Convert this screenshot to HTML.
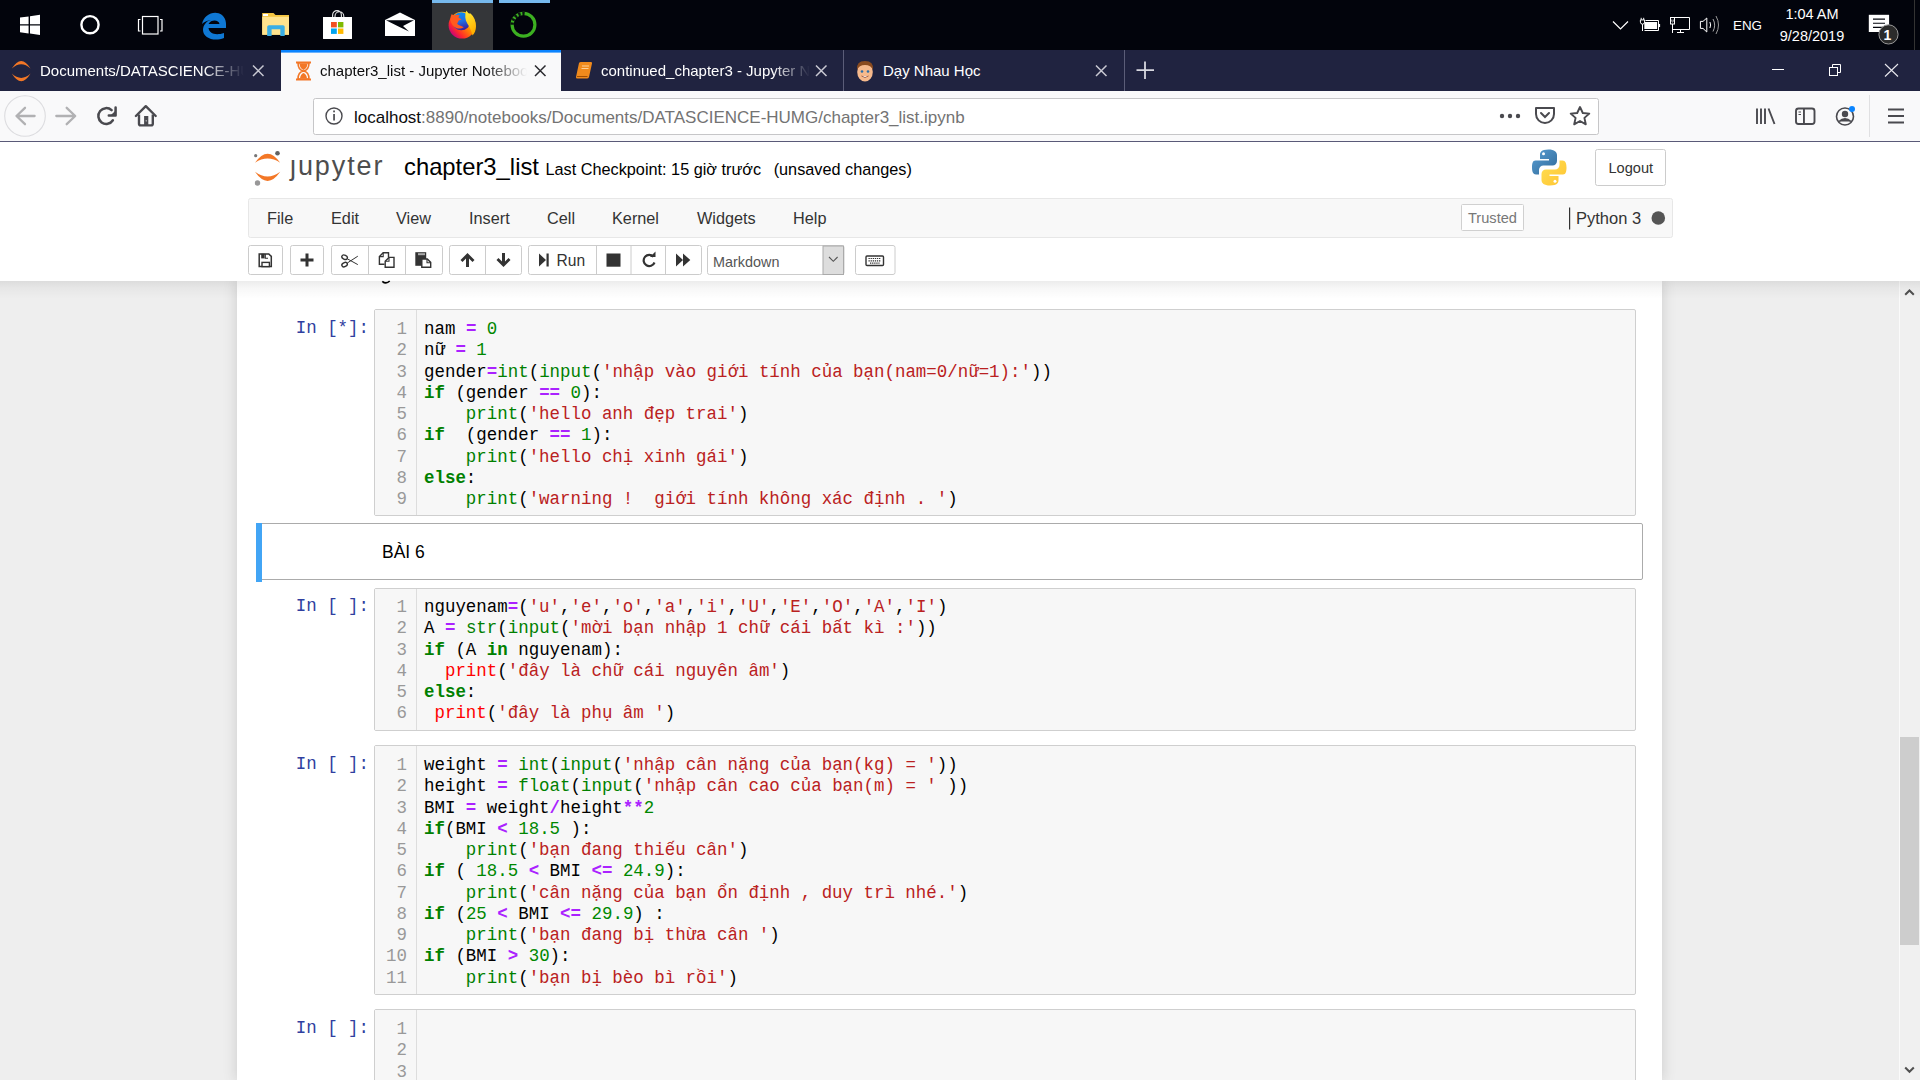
<!DOCTYPE html>
<html><head><meta charset="utf-8">
<style>
*{box-sizing:border-box;margin:0;padding:0}
html,body{width:1920px;height:1080px;overflow:hidden;background:#eee;font-family:"Liberation Sans",sans-serif}
.abs{position:absolute}
#taskbar{position:absolute;left:0;top:0;width:1920px;height:50px;background:#02040c}
#tabbar{position:absolute;left:0;top:50px;width:1920px;height:41px;background:#202340}
#navbar{position:absolute;left:0;top:91px;width:1920px;height:51px;background:#f9f9fa;border-bottom:1px solid #5a5a78}
#header{position:absolute;left:0;top:142px;width:1920px;height:139px;background:#fff;z-index:2;}
#nb{position:absolute;left:237px;top:281px;width:1425px;height:799px;background:#fff;box-shadow:0 0 12px 1px rgba(87,87,87,.2)}
.tab{position:absolute;top:0;height:41px;color:#fff;font-size:15px}
.tabtxt{position:absolute;top:12px;white-space:nowrap;overflow:hidden}
.mono{font-family:"Liberation Mono",monospace}
.prompt{position:absolute;font-family:"Liberation Mono",monospace;font-size:17.45px;color:#303f9f;text-align:right;width:132px;margin-top:1px}
.inarea{position:absolute;left:137px;width:1262px;background:#f7f7f7;border:1px solid #cfcfcf;border-radius:2px}
.gutter{position:absolute;left:0;top:0;bottom:0;width:42px;background:#f7f7f7;border-right:1px solid #ddd}
.code{position:absolute;left:49px;top:9px;font-family:"Liberation Mono",monospace;font-size:17.45px;line-height:21.25px;white-space:pre;color:#000}
.ln{position:absolute;left:0;top:9px;width:32px;text-align:right;font-family:"Liberation Mono",monospace;font-size:17.45px;line-height:21.25px;white-space:pre;color:#999}
.k{color:#008000;font-weight:bold;-webkit-text-stroke:0}
.o{color:#aa22ff;font-weight:bold;-webkit-text-stroke:0}
.b{color:#008000}
.s{color:#ba2121}
.n{color:#080}
.e{color:#f00}
</style></head><body>
<div id="taskbar">
<svg class="abs" style="left:0;top:0" width="1920" height="50">
 <!-- windows logo -->
 <path d="M20 17.6 L28.6 16.4 L28.6 24.2 L20 24.2Z M30 16.2 L40 14.8 L40 24.2 L30 24.2Z M20 25.6 L28.6 25.6 L28.6 33.4 L20 32.2Z M30 25.6 L40 25.6 L40 35 L30 33.6Z" fill="#fff"/>
 <!-- cortana -->
 <circle cx="90" cy="24.7" r="8.6" fill="none" stroke="#fff" stroke-width="2.4"/>
 <!-- task view -->
 <rect x="142.5" y="16.5" width="15.5" height="17.5" fill="none" stroke="#fff" stroke-width="1.2"/>
 <path d="M140.5 19.5 H138.5 V31 H140.5 M160 19.5 H162 V31 H160" fill="none" stroke="#fff" stroke-width="1.2"/>
 <!-- edge -->
 <path d="M202 24 C204 14 215 10 222 15 C227 19 226 26 226 28 L208.5 28 C209 33 215 36 224 33 L224 38 C214 42 203 38 203 30 C203 25 207 20 212 20 C208 20 204 22 202 24Z M208.5 24 L219.5 24 C219 19.5 211 19 208.5 24Z" fill="#0f78d4" fill-rule="evenodd"/>
 <!-- file explorer -->
 <path d="M262.2 13 L273.5 13 L275.5 15 L289 15 L289 34.8 L262.2 34.8Z" fill="#f4c542"/>
 <path d="M262.2 16.8 L289 16.8 L289 34.8 L262.2 34.8Z" fill="#ffe38e"/>
 <rect x="263" y="14" width="5" height="2" fill="#fff"/>
 <path d="M267.2 36 V26.8 Q267.2 25.2 269 25.2 H283 Q284.7 25.2 284.7 26.8 V36 H280.3 V29.2 H271.6 V36Z" fill="#3aaee5"/>
 <!-- store -->
 <path d="M332.6 17.5 V15 A4.4 4.4 0 0 1 341.4 15 V17.5 M335 17.5 V16.2 A4.4 4.4 0 0 1 343.8 16.2 V17.5" fill="none" stroke="#e6e6e6" stroke-width="1.1"/>
 <path d="M323 17 H352 V38.5 C352 39 351.5 39 351 39 H324 C323.5 39 323 39 323 38.5Z" fill="#fff"/>
 <rect x="331" y="22" width="5.8" height="5.4" fill="#f25022"/>
 <rect x="338" y="22" width="5.4" height="5.4" fill="#7fba00"/>
 <rect x="331" y="28.5" width="5.8" height="5.4" fill="#00a4ef"/>
 <rect x="338" y="28.5" width="5.4" height="5.4" fill="#ffb900"/>
 <!-- mail -->
 <path d="M385 20 L400 12.5 L415 20 V36 H385Z" fill="#fff"/>
 <path d="M386 20.3 L414 20.3 L403 26 L409 31.5 L399.5 27Z" fill="#02040c"/>
 <!-- firefox highlight -->
 <rect x="432" y="0" width="61" height="50" fill="#343639"/>
 <rect x="432" y="0" width="61" height="3" fill="#76b9ed"/>
 <rect x="499" y="0" width="51" height="3" fill="#76b9ed"/>
 <defs>
  <linearGradient id="ffg" x1="0.15" y1="0.9" x2="0.9" y2="0.2"><stop offset="0" stop-color="#c5007f"/><stop offset="0.25" stop-color="#ff2a2a"/><stop offset="0.6" stop-color="#ff8a00"/><stop offset="1" stop-color="#ffd51a"/></linearGradient>
  <linearGradient id="ffb" x1="0.3" y1="0" x2="0.6" y2="1"><stop offset="0" stop-color="#0a8ff0"/><stop offset="0.5" stop-color="#1f6fe6"/><stop offset="1" stop-color="#3a1a9a"/></linearGradient>
  <linearGradient id="fft" x1="0" y1="0" x2="0.4" y2="1"><stop offset="0" stop-color="#fff03a"/><stop offset="1" stop-color="#ffb000"/></linearGradient>
 </defs>
 <circle cx="462" cy="25.2" r="13.4" fill="url(#ffg)"/>
 <circle cx="461.3" cy="21.3" r="9" fill="url(#ffb)"/>
 <path d="M466.3 10.6 L468.6 13.6 L470.6 13.4 C474 16.5 476 21 476 26 C476 30.5 474.5 33.5 472.5 35.5 C471.5 30 469 26 467.3 23.5 C465 20 464.6 15 466.3 10.6Z" fill="url(#fft)"/>
 <path d="M451.8 13.9 L453.5 15.5 C455.5 14.8 457.5 14.8 459.6 15.3 L458.3 17.3 L461.6 19.6 L458.8 20.6 L457.1 23.8 C458.5 25.5 461 25.8 463.8 27.2 C462 28.5 459 28.8 456.8 28.2 C453.5 27 451.2 24 450.5 20.5 C450.2 18 450.7 15.8 451.8 13.9Z" fill="#ff5a1f"/>
 <!-- green ring -->
 <circle cx="523.5" cy="24.8" r="11.4" fill="none" stroke="#3cb021" stroke-width="3.2"/>
 <circle cx="523.5" cy="24.8" r="11.4" fill="none" stroke="#02040c" stroke-width="3.4" stroke-dasharray="1.6 1.6" stroke-dashoffset="0" pathLength="60" transform="rotate(180 523.5 24.8)" opacity="0.9" style="stroke-dasharray:2 1.5 2 1.5 2 1.5 2 1.5 2 100"/>
 <!-- tray -->
 <path d="M1613 21.5 L1620.5 29 L1628 21.5" fill="none" stroke="#fff" stroke-width="1.2"/>
 <path d="M1641.2 17.8 V19.8 M1643.7 17.8 V19.8" stroke="#fff" stroke-width="1"/>
 <path d="M1640.4 19.9 H1644.6 V22.2 Q1644.6 24 1642.5 24.2 Q1640.4 24 1640.4 22.2Z" fill="none" stroke="#fff" stroke-width="1"/>
 <path d="M1642.5 24.2 V31" stroke="#fff" stroke-width="1"/>
 <path d="M1645.5 20.5 H1658.5 V30.5 H1644.5" fill="none" stroke="#fff" stroke-width="1"/>
 <rect x="1644.3" y="22" width="12.8" height="7" fill="#fff"/>
 <rect x="1659" y="24" width="1.1" height="3" fill="#fff"/>
 <path d="M1670.5 17.5 H1689.5 V29.5 H1673 M1672.5 24 V33 M1677 32.5 H1684 M1680.5 29.5 V32.5" fill="none" stroke="#fff" stroke-width="1"/>
 <rect x="1670.5" y="17.5" width="4" height="6.5" fill="#02040c" stroke="#fff" stroke-width="1"/>
 <path d="M1671.8 19.5 V21.5 Q1672.5 22.5 1673.3 21.5 V19.5" fill="none" stroke="#fff" stroke-width="0.7"/>
 <path d="M1700.4 21.4 H1703 L1706.8 18 V32 L1703 28.4 H1700.4Z" fill="none" stroke="#fff" stroke-width="1"/>
 <path d="M1709.9 22 Q1711.4 25 1709.9 28" fill="none" stroke="#fff" stroke-width="1"/>
 <path d="M1713 19 Q1716.3 25 1713 31.5" fill="none" stroke="#aaa" stroke-width="1"/>
 <path d="M1716 16 Q1721 25 1716 34" fill="none" stroke="#999" stroke-width="1"/>
 <!-- notification -->
 <path d="M1868.8 14.8 H1889.1 V32 H1878.5 L1875 32 V32 H1868.8Z" fill="#fff"/>
 <path d="M1873 19.1 H1885 M1873 23.3 H1885 M1873 27.4 H1885" stroke="#02040c" stroke-width="1.1"/>
 <circle cx="1888.5" cy="34.4" r="9.6" fill="#2b2b2b" stroke="#999" stroke-width="1"/>
 <rect x="1914" y="0" width="1" height="50" fill="#333"/>
</svg>
<div class="abs" style="left:1733px;top:18px;font-size:13.4px;color:#fff;letter-spacing:0">ENG</div>
<div class="abs" style="left:1770px;top:5px;width:84px;text-align:center;font-size:14.5px;color:#fff;line-height:18px">1:04 AM<br><span style="position:relative;top:4px">9/28/2019</span></div>
<div class="abs" style="left:1883.5px;top:26.5px;font-size:14px;color:#fff;font-weight:bold">1</div>
</div>

<div id="tabbar">
<svg class="abs" style="left:0;top:0" width="1920" height="41">
 <!-- tab1 jupyter favicon -->
 <path d="M11.8 18.6 Q21.2 3.2 30.6 18.6 Q21.2 10 11.8 18.6Z" fill="#f37726"/>
 <path d="M11.8 23.6 Q21.2 39 30.6 23.6 Q21.2 32.2 11.8 23.6Z" fill="#f37726"/>
 <path d="M253 15.5 L263.5 26 M263.5 15.5 L253 26" stroke="#c8c9d2" stroke-width="1.5"/>
 <!-- active tab -->
 <rect x="281" y="0" width="280" height="41" fill="#f9f9fa"/>
 <rect x="281" y="0" width="280" height="2.6" fill="#0a84ff"/>
 <path d="M296 12.5 H311 M296 29.5 H311" stroke="#f37726" stroke-width="2.2"/>
 <path d="M298 13 Q298 20 303.5 21 Q309 20 309 13Z M298 29 Q298 22 303.5 21 Q309 22 309 29Z" fill="none" stroke="#f37726" stroke-width="1.6"/>
 <path d="M299.5 14 H307.5 Q307 18.5 303.5 20 Q300 18.5 299.5 14Z M300 28.5 Q300.5 24 303.5 23 Q306.5 24 307 28.5Z" fill="#f37726"/>
 <path d="M535 15.5 L545.5 26 M545.5 15.5 L535 26" stroke="#2a2a2e" stroke-width="1.5"/>
 <!-- tab3 book -->
 <path d="M576 27 L579 13 Q579.5 12 581 12 L591 12 Q592.5 12 592 13.5 L589 27 Q588.5 28.5 587 28.5 L577.5 28.5 Q575.5 28.5 576 27Z" fill="#f08a1c"/>
 <path d="M577 26.5 L587.5 26.5" stroke="#a24e00" stroke-width="1"/>
 <path d="M582 16 H589 M581.5 18.5 H588.5" stroke="#ffd9a8" stroke-width="0.9"/>
 <path d="M816 15.5 L826.5 26 M826.5 15.5 L816 26" stroke="#c8c9d2" stroke-width="1.5"/>
 <rect x="843" y="0" width="1" height="41" fill="#5b5d78"/>
 <!-- tab4 face -->
 <ellipse cx="865" cy="22" rx="7.8" ry="9.5" fill="#f6b98c"/>
 <path d="M857 20 Q856 11 865 11 Q874 11 873 20 Q871 15 865 15 Q859 15 857 20Z" fill="#8a4b1f"/>
 <circle cx="862" cy="21.5" r="1.3" fill="#2b6ea8"/><circle cx="868" cy="21.5" r="1.3" fill="#2b6ea8"/>
 <path d="M861.5 26 Q865 29 868.5 26" fill="#fff" stroke="#8a3b1f" stroke-width="0.8"/>
 <path d="M1096 15.5 L1106.5 26 M1106.5 15.5 L1096 26" stroke="#c8c9d2" stroke-width="1.5"/>
 <rect x="1124" y="0" width="1" height="41" fill="#5b5d78"/>
 <path d="M1145 11.5 V29 M1136.5 20.2 H1154" stroke="#d7d8df" stroke-width="1.8"/>
 <!-- window controls -->
 <path d="M1772 19.5 H1784" stroke="#fff" stroke-width="1"/>
 <rect x="1829.5" y="17.5" width="8" height="8" fill="none" stroke="#fff" stroke-width="1"/>
 <path d="M1832.5 17.5 V14.5 H1840.5 V22.5 H1837.5" fill="none" stroke="#fff" stroke-width="1"/>
 <path d="M1885 14 L1898 26.5 M1898 14 L1885 26.5" stroke="#e8e8ee" stroke-width="1.1"/>
</svg>
<div class="tabtxt" style="left:40px;width:204px;color:#fff;font-size:15px;-webkit-mask-image:linear-gradient(90deg,#000 80%,transparent)">Documents/DATASCIENCE-HUMG/</div>
<div class="tabtxt" style="left:320px;width:207px;color:#0c0c0d;font-size:15px;-webkit-mask-image:linear-gradient(90deg,#000 80%,transparent)">chapter3_list - Jupyter Notebook</div>
<div class="tabtxt" style="left:601px;width:209px;color:#fff;font-size:15px;-webkit-mask-image:linear-gradient(90deg,#000 82%,transparent)">continued_chapter3 - Jupyter Notebook</div>
<div class="tabtxt" style="left:883px;width:200px;color:#fff;font-size:15px">Dạy Nhau Học</div>
</div>

<div id="navbar">
<svg class="abs" style="left:0;top:0" width="1920" height="51">
 <circle cx="25" cy="25" r="20.3" fill="none" stroke="#dcdcdf" stroke-width="1.1"/>
 <path d="M34.6 25 H16.5 M25 16.8 L16.5 25 L25 33.2" fill="none" stroke="#b1b1b3" stroke-width="2.3" stroke-linecap="round" stroke-linejoin="round"/>
 <path d="M56.3 25 H74.8 M66.7 16.8 L75.2 25 L66.7 33.2" fill="none" stroke="#b1b1b3" stroke-width="2.3" stroke-linecap="round" stroke-linejoin="round"/>
 <path d="M111.6 19.2 A7.9 7.9 0 1 0 112.9 29.3" fill="none" stroke="#4a4a4f" stroke-width="2.5" stroke-linecap="round"/>
 <path d="M108.8 24.4 H115.6 V16.4" fill="none" stroke="#4a4a4f" stroke-width="2.5" stroke-linecap="round" stroke-linejoin="round"/>
 <path d="M110.5 24.4 L115.6 19.5 V24.4Z" fill="#4a4a4f"/>
 <path d="M135.9 25 L145.8 15.2 L155.7 25" fill="none" stroke="#4a4a4f" stroke-width="2.4" stroke-linecap="round" stroke-linejoin="round"/>
 <path d="M139 23.5 V32.8 Q139 34.4 140.6 34.4 H151.2 Q152.8 34.4 152.8 32.8 V23.5" fill="none" stroke="#4a4a4f" stroke-width="2.4"/>
 <rect x="144.1" y="25" width="4.2" height="9.5" fill="#4a4a4f"/>
 <circle cx="146.2" cy="29.8" r="0.6" fill="#fff"/>
 <rect x="313.5" y="7.5" width="1285" height="36" rx="2" fill="#fff" stroke="#c6c6c8" stroke-width="1"/>
 <circle cx="334" cy="25" r="8" fill="none" stroke="#4a4a4f" stroke-width="1.4"/>
 <rect x="333.2" y="23" width="1.7" height="6.5" fill="#4a4a4f"/><rect x="333.2" y="19.5" width="1.7" height="1.8" fill="#4a4a4f"/>
 <circle cx="1502" cy="25" r="2.2" fill="#4a4a4f"/><circle cx="1510" cy="25" r="2.2" fill="#4a4a4f"/><circle cx="1518" cy="25" r="2.2" fill="#4a4a4f"/>
 <path d="M1536 17 H1554 V23 A9 9 0 0 1 1536 23Z" fill="none" stroke="#4a4a4f" stroke-width="2" stroke-linejoin="round"/>
 <path d="M1541 22 L1545 26 L1549 22" fill="none" stroke="#4a4a4f" stroke-width="2" stroke-linecap="round"/>
 <path d="M1580 16 L1582.8 22 L1589.3 22.6 L1584.4 26.9 L1585.8 33.3 L1580 30 L1574.2 33.3 L1575.6 26.9 L1570.7 22.6 L1577.2 22Z" fill="none" stroke="#4a4a4f" stroke-width="1.9" stroke-linejoin="round"/>
 <path d="M1757 17.5 V33 M1761 17.5 V33 M1765 17.5 V33 M1768.5 17.5 L1774.5 33" fill="none" stroke="#4a4a4f" stroke-width="1.9"/>
 <rect x="1796" y="17.5" width="18.5" height="15.5" rx="2.5" fill="none" stroke="#4a4a4f" stroke-width="1.9"/>
 <rect x="1803" y="17.5" width="1.9" height="15.5" fill="#4a4a4f"/>
 <path d="M1798.5 21 H1801 M1798.5 23.5 H1801" stroke="#4a4a4f" stroke-width="1"/>
 <circle cx="1845" cy="25.5" r="8.5" fill="none" stroke="#4a4a4f" stroke-width="1.6"/>
 <circle cx="1845" cy="23" r="3.2" fill="#4a4a4f"/>
 <path d="M1839 30.5 Q1845 25 1851 30.5" fill="#4a4a4f" stroke="#4a4a4f" stroke-width="1.6"/>
 <circle cx="1852" cy="18" r="3" fill="#0a84ff"/>
 <rect x="1869" y="4" width="1" height="42" fill="#e0e0e2"/>
 <path d="M1888 18.5 H1904 M1888 25 H1904 M1888 31.5 H1904" stroke="#4a4a4f" stroke-width="2"/>
</svg>
<div class="abs" style="left:354px;top:17px;font-size:17px;color:#0c0c0d;white-space:nowrap">localhost<span style="color:#737373">:8890/notebooks/Documents/DATASCIENCE-HUMG/chapter3_list.ipynb</span></div>
</div>

<div id="header">
<svg class="abs" style="left:0;top:0" width="1920" height="139">
 <!-- jupyter logo: header top is 142 -->
 <path d="M255 20.8 Q267.6 2.6 280.2 20.8 Q267.6 12.4 255 20.8Z" fill="#f37726"/>
 <path d="M255 29.8 Q267.6 48 280.2 29.8 Q267.6 39.2 255 29.8Z" fill="#f37726"/>
 <circle cx="255.7" cy="13.7" r="1.6" fill="#767677"/>
 <circle cx="277.5" cy="11.2" r="2.3" fill="#616262"/>
 <circle cx="257.5" cy="41" r="2.7" fill="#989798"/>
 <!-- python logo -->
 <defs>
  <linearGradient id="pyb" x1="0" y1="0" x2="1" y2="1"><stop offset="0" stop-color="#5a9fd4"/><stop offset="1" stop-color="#306998"/></linearGradient>
  <linearGradient id="pyy" x1="0" y1="0" x2="1" y2="1"><stop offset="0" stop-color="#ffe052"/><stop offset="1" stop-color="#ffc331"/></linearGradient>
 </defs>
 <path d="M1548.5 7.5 C1541 7.5 1540 10.5 1540 13 V17 H1549 V18.5 H1535.5 C1532.5 18.5 1532 22 1532 25.5 C1532 29.5 1533 32.5 1536 32.5 H1539 V28 C1539 25.5 1541 23.5 1543.5 23.5 H1552.5 C1555 23.5 1557 21.5 1557 19 V13 C1557 10 1554.5 7.5 1548.5 7.5Z" fill="url(#pyb)"/>
 <circle cx="1543.5" cy="11.8" r="1.5" fill="#fff"/>
 <path d="M1550 43.5 C1557.5 43.5 1558.5 40.5 1558.5 38 V34 H1549.5 V32.5 H1563 C1566 32.5 1566.5 29 1566.5 25.5 C1566.5 21.5 1565.5 18.5 1562.5 18.5 H1559.5 V23 C1559.5 25.5 1557.5 27.5 1555 27.5 H1546 C1543.5 27.5 1541.5 29.5 1541.5 32 V38 C1541.5 41 1544 43.5 1550 43.5Z" fill="url(#pyy)"/>
 <circle cx="1555" cy="39.2" r="1.5" fill="#fff"/>
 <!-- logout -->
 <rect x="1595.5" y="7.5" width="70" height="36" rx="2" fill="#fff" stroke="#ccc"/>
 <!-- menubar -->
 <rect x="248.5" y="56.5" width="1424" height="39" rx="2" fill="#f8f8f8" stroke="#e7e7e7"/>
 <rect x="1461.5" y="62.5" width="62" height="26" rx="1" fill="#fff" stroke="#ccc" stroke-width="1" opacity="0.9"/>
 <rect x="1569" y="65.5" width="1.2" height="22" fill="#333"/>
 <circle cx="1658.3" cy="76" r="6.8" fill="#555"/>
 <!-- toolbar buttons: top 245 => 103 -->
 <g fill="#fff" stroke="#ccc" stroke-width="1">
  <rect x="248.5" y="103.5" width="34" height="29" rx="2"/>
  <rect x="290.5" y="103.5" width="33" height="29" rx="2"/>
  <rect x="331.5" y="103.5" width="111" height="29" rx="2"/>
  <rect x="449.5" y="103.5" width="72" height="29" rx="2"/>
  <rect x="528.5" y="103.5" width="173" height="29" rx="2"/>
  <rect x="707.5" y="103.5" width="136.5" height="29" rx="2"/>
  <rect x="855.5" y="103.5" width="39.5" height="29" rx="2"/>
 </g>
 <path d="M368.5 104 V133 M405.5 104 V133 M485.5 104 V133 M596.5 104 V133 M631 104 V133 M665.5 104 V133" stroke="#ccc" stroke-width="1"/>
 <rect x="823" y="104" width="20.5" height="28.5" fill="#ddd" stroke="#aaa" stroke-width="1"/>
 <path d="M829 115 L833.3 119.3 L837.6 115" fill="none" stroke="#555" stroke-width="1.1"/>
 <!-- icons -->
 <g fill="#333">
  <!-- save -->
  <path d="M259.2 111.9 H268.8 L271.3 114.4 V124.4 H259.2Z" fill="#fff" stroke="#333" stroke-width="1.5"/><rect x="261.2" y="111.8" width="3.4" height="4.6"/><path d="M265.3 112 V116.2 H268" fill="none" stroke="#333" stroke-width="1.1"/><rect x="262" y="120.4" width="7.4" height="4.2" fill="#fff" stroke="#333" stroke-width="1.4"/>
  <!-- plus -->
  <path d="M305.5 111.5 H308.5 V116.5 H313.5 V119.5 H308.5 V124.5 H305.5 V119.5 H300.5 V116.5 H305.5Z"/>
  <!-- paste -->
  <path d="M415.3 110.2 H426.2 V123.8 H415.3Z"/>
  <rect x="418" y="111.2" width="7" height="2" fill="#aaa"/>
  <path d="M421.8 117 H427.3 L430.7 120.4 V125.2 H421.8Z" fill="#fff" stroke="#333" stroke-width="1.4"/>
  <path d="M427 117 V120.7 H430.7" fill="none" stroke="#333" stroke-width="1.1"/>
  <!-- up arrow -->
  <path d="M467.5 111 L474.5 118 L472.5 120 L469 116.5 V125 H466 V116.5 L462.5 120 L460.5 118Z"/>
  <path d="M503.5 125 L510.5 118 L508.5 116 L505 119.5 V111 H502 V119.5 L498.5 116 L496.5 118Z"/>
  <!-- run step -->
  <path d="M539 111.5 L546 118 L539 124.5Z"/><rect x="546.5" y="111.5" width="2.2" height="13"/>
  <!-- stop -->
  <rect x="606.5" y="111.5" width="14" height="13.2"/>
  <!-- ff -->
  <path d="M676 111.5 L683 118 L676 124.5Z M683 111.5 L690.3 118 L683 124.5Z"/>
 </g>
 <!-- scissors -->
 <g fill="none" stroke="#333" stroke-width="1.2">
  <ellipse cx="344.6" cy="115.2" rx="2.9" ry="2" transform="rotate(25 344.6 115.2)" stroke-width="1.4"/>
  <ellipse cx="344.6" cy="122.6" rx="2.9" ry="2" transform="rotate(-25 344.6 122.6)" stroke-width="1.4"/>
  <path d="M347.3 116.8 L357.8 122.6 M347.3 121 L357.8 114.2" stroke-width="1"/>
  <!-- copy -->
  <path d="M388.5 115.5 V110.8 H383.2 L379.4 114.6 V122.3 H384.5" stroke-width="1.4"/>
  <path d="M383.2 110.8 V114.6 H379.4" stroke-width="1.1"/>
  <path d="M385.2 119.2 L389 115.4 H394 V125.3 H385.2Z" fill="#fff" stroke-width="1.4"/>
  <path d="M389 115.4 V119.2 H385.2" stroke-width="1.1"/>
  <!-- restart -->
  <path d="M653.5 114.8 A5.6 5.6 0 1 0 654.5 120.5" stroke-width="2.2"/>
 </g>
 <path d="M650 115 H655.5 V109.5Z" fill="#333"/>
 <!-- keyboard -->
 <rect x="866" y="114" width="17.5" height="9.5" rx="1" fill="none" stroke="#333" stroke-width="1.4"/>
 <path d="M868.5 116.5 H881 M868.5 118.8 H881 M870 121.2 H879.5" stroke="#333" stroke-width="1.2" stroke-dasharray="1.3 0.8"/>
</svg>
<div class="abs" style="left:290px;top:9px;font-size:27px;color:#4e4e4e;letter-spacing:1.9px">jupyter</div><div class="abs" style="left:289px;top:9px;width:8px;height:7.5px;background:#fff"></div>
<div class="abs" style="left:404px;top:11px;font-size:23.8px;color:#000;white-space:nowrap">chapter3_list <span style="font-size:16.25px;position:relative;top:0px">Last Checkpoint: 15 giờ trước&nbsp;&nbsp;<span style="margin-left:3.5px">(unsaved changes)</span></span></div>
<div class="abs" style="left:1608.5px;top:18px;font-size:14.6px;color:#333">Logout</div>
<div class="abs menu" style="left:267px;top:67px;font-size:16.25px;color:#333;white-space:nowrap">
 <span style="position:absolute;left:0">File</span><span style="position:absolute;left:64px">Edit</span><span style="position:absolute;left:129px">View</span><span style="position:absolute;left:202px">Insert</span><span style="position:absolute;left:280px">Cell</span><span style="position:absolute;left:345px">Kernel</span><span style="position:absolute;left:430px">Widgets</span><span style="position:absolute;left:526px">Help</span>
</div>
<div class="abs" style="left:1468px;top:68px;font-size:14.6px;color:#777">Trusted</div>
<div class="abs" style="left:1576px;top:67px;font-size:16.5px;color:#333">Python 3</div>
<div class="abs" style="left:556.5px;top:110px;font-size:15.6px;color:#333">Run</div>
<div class="abs" style="left:713px;top:112px;font-size:14.4px;color:#555">Markdown</div>
</div>

<div id="nb">
<div class="prompt" style="top:36px;left:0">In&nbsp;[*]:</div>
<div class="inarea" style="top:28px;height:207px"><div class="gutter"></div><div class="ln">1
2
3
4
5
6
7
8
9</div><div class="code"><span>nam</span> <span class="o">=</span> <span class="n">0</span>
nữ <span class="o">=</span> <span class="n">1</span>
gender<span class="o">=</span><span class="b">int</span>(<span class="b">input</span>(<span class="s">'nhập vào giới tính của bạn(nam=0/nữ=1):'</span>))
<span class="k">if</span> (gender <span class="o">==</span> <span class="n">0</span>):
    <span class="b">print</span>(<span class="s">'hello anh đẹp trai'</span>)
<span class="k">if</span>  (gender <span class="o">==</span> <span class="n">1</span>):
    <span class="b">print</span>(<span class="s">'hello chị xinh gái'</span>)
<span class="k">else</span>:
    <span class="b">print</span>(<span class="s">'warning !  giới tính không xác định . '</span>)</div></div>
<div class="md" style="position:absolute;left:19px;top:242px;width:1387px;height:57px;border:1px solid #ababab;border-radius:2px"><div style="position:absolute;left:-1px;top:-1px;width:6px;height:58.5px;background:#42a5f5"></div><div style="position:absolute;left:125px;top:18px;font-size:17.5px;color:#000">BÀI 6</div></div>
<div class="prompt" style="top:314px;left:0">In&nbsp;[&nbsp;]:</div>
<div class="inarea" style="top:307px;height:143px"><div class="gutter"></div><div class="ln" style="top:8px">1
2
3
4
5
6</div><div class="code" style="top:8px">nguyenam<span class="o">=</span>(<span class="s">'u'</span>,<span class="s">'e'</span>,<span class="s">'o'</span>,<span class="s">'a'</span>,<span class="s">'i'</span>,<span class="s">'U'</span>,<span class="s">'E'</span>,<span class="s">'O'</span>,<span class="s">'A'</span>,<span class="s">'I'</span>)
A <span class="o">=</span> <span class="b">str</span>(<span class="b">input</span>(<span class="s">'mời bạn nhập 1 chữ cái bất kì :'</span>))
<span class="k">if</span> (A <span class="k">in</span> nguyenam):
  <span class="e">print</span>(<span class="s">'đây là chữ cái nguyên âm'</span>)
<span class="k">else</span>:
 <span class="e">print</span>(<span class="s">'đây là phụ âm '</span>)</div></div>
<div class="prompt" style="top:472px;left:0">In&nbsp;[&nbsp;]:</div>
<div class="inarea" style="top:464px;height:250px"><div class="gutter"></div><div class="ln">1
2
3
4
5
6
7
8
9
10
11</div><div class="code">weight <span class="o">=</span> <span class="b">int</span>(<span class="b">input</span>(<span class="s">'nhập cân nặng của bạn(kg) = '</span>))
height <span class="o">=</span> <span class="b">float</span>(<span class="b">input</span>(<span class="s">'nhập cân cao của bạn(m) = '</span> ))
BMI <span class="o">=</span> weight<span class="o">/</span>height<span class="o">**</span><span class="n">2</span>
<span class="k">if</span>(BMI <span class="o">&lt;</span> <span class="n">18.5</span> ):
    <span class="b">print</span>(<span class="s">'bạn đang thiếu cân'</span>)
<span class="k">if</span> ( <span class="n">18.5</span> <span class="o">&lt;</span> BMI <span class="o">&lt;=</span> <span class="n">24.9</span>):
    <span class="b">print</span>(<span class="s">'cân nặng của bạn ổn định , duy trì nhé.'</span>)
<span class="k">if</span> (<span class="n">25</span> <span class="o">&lt;</span> BMI <span class="o">&lt;=</span> <span class="n">29.9</span>) :
    <span class="b">print</span>(<span class="s">'bạn đang bị thừa cân '</span>)
<span class="k">if</span> (BMI <span class="o">&gt;</span> <span class="n">30</span>):
    <span class="b">print</span>(<span class="s">'bạn bị bèo bì rồi'</span>)</div></div>
<div class="prompt" style="top:736px;left:0">In&nbsp;[&nbsp;]:</div>
<div class="inarea" style="top:728px;height:120px"><div class="gutter"></div><div class="ln">1
2
3</div><div class="code">

</div></div>
</div>
<div class="abs" style="left:1899px;top:281px;width:1px;height:799px;background:#fafafa;z-index:1"></div>
<div class="abs" style="left:1900px;top:281px;width:20px;height:799px;background:#f0f0f0;z-index:1">
 <div class="abs" style="left:0;top:456px;width:19px;height:208px;background:#cdcdcd"></div>
 <svg class="abs" style="left:0;top:0" width="20" height="799"><path d="M5.2 13.8 L9.5 9.5 L13.8 13.8" fill="none" stroke="#505050" stroke-width="2"/><path d="M5.2 786.5 L9.5 790.8 L13.8 786.5" fill="none" stroke="#505050" stroke-width="2"/></svg>
</div>
<div class="abs" style="left:0;top:281px;width:1920px;height:18px;z-index:1;background:linear-gradient(rgba(0,0,0,.075),rgba(0,0,0,.03) 40%,rgba(0,0,0,0))"></div>
<svg class="abs" style="left:378px;top:276px;z-index:3" width="16" height="10"><path d="M4.3 5.3 Q8 8.6 11.7 5.0" fill="none" stroke="#000" stroke-width="1.7"/></svg>
</body></html>
